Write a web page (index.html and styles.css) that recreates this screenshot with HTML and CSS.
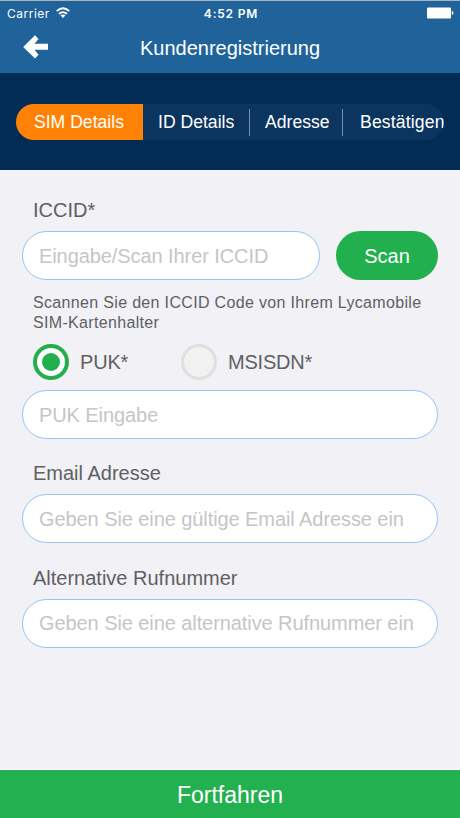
FILE: index.html
```html
<!DOCTYPE html>
<html lang="de">
<head>
<meta charset="utf-8">
<title>Kundenregistrierung</title>
<link rel="stylesheet" href="styles.css">
</head>
<body>
<header class="header">
  <div class="status">
    <div class="carrier"><span>Carrier</span>
      <svg class="wifi" width="14" height="12" viewBox="0 0 14 12" fill="none" stroke="#fff" stroke-width="1.8"><path d="M.7 4.200Q7-1.800 13.300 4.200M3 6.900Q7 3.300 11 6.900"/><path d="M4.500 8.300Q7 6.500 9.500 8.300L7 10.900Z" fill="#fff" stroke="none"/></svg>
    </div>
    <span class="time">4:52 PM</span>
    <svg class="battery" width="27" height="12" viewBox="0 0 27 12" fill="#fff"><rect y=".4" width="24" height="11" rx="1"/><path d="M24.800 3.800Q26.500 4 26.500 5.900T24.800 8Z"/></svg>
  </div>
  <div class="navbar">
    <svg class="back" width="26" height="24" viewBox="0 0 26 24"><path d="M.2 12 12 .3 15.600 4 11.400 8.800H25V14.800H11.400L15.600 19.800 12 23.600Z" fill="#fff"/></svg>
    <h1 class="title">Kundenregistrierung</h1>
  </div>
</header>
<nav class="steps">
  <div class="tabs">
    <span class="tab active">SIM Details</span>
    <span class="tab">ID Details</span>
    <span class="tab divided">Adresse</span>
    <span class="tab divided last">Bestätigen</span>
  </div>
</nav>
<main class="form">
  <label class="label" for="iccid">ICCID*</label>
  <div class="scan-row">
    <input class="field" id="iccid" placeholder="Eingabe/Scan Ihrer ICCID">
    <button class="scan">Scan</button>
  </div>
  <p class="hint">Scannen Sie den ICCID Code von Ihrem Lycamobile<br>SIM-Kartenhalter</p>
  <div class="choices">
    <div class="choice"><span class="radio checked"></span>PUK*</div>
    <div class="choice"><span class="radio"></span>MSISDN*</div>
  </div>
  <input class="field" placeholder="PUK Eingabe">
  <label class="label spaced" for="email">Email Adresse</label>
  <input class="field" id="email" placeholder="Geben Sie eine gültige Email Adresse ein">
  <label class="label spaced" for="phone">Alternative Rufnummer</label>
  <input class="field" id="phone" placeholder="Geben Sie eine alternative Rufnummer ein">
</main>
<button class="continue">Fortfahren</button>
</body>
</html>
```
FILE: styles.css
```css
* { box-sizing: border-box; }

body {
  margin: 0;
  height: 818px;
  display: flex;
  flex-direction: column;
  overflow: hidden;
  background: #f1f1f6;
  font-family: "Liberation Sans", Arial, sans-serif;
  color: #606064;
}

.header {
  height: 73px;
  border-top: 1px solid #a9b4ba;
  background: #20639b;
  color: #fff;
}

.status {
  display: grid;
  grid-template-columns: 1fr auto 1fr;
  align-items: center;
  height: 24px;
  padding: 0 7px;
  font-family: Inter, sans-serif;
  font-size: 12px;
  letter-spacing: 0.5px;
}

.carrier { display: flex; align-items: center; gap: 6px; }
.wifi { margin-top: -1px; }
.time { padding-left: 2px; font-weight: 600; font-size: 12px; letter-spacing: 0.8px; }
.battery { justify-self: end; margin-right: -1px; }

.navbar {
  display: grid;
  grid-template-columns: 1fr auto 1fr;
  align-items: center;
  height: 46px;
  padding: 0 23px;
}

.back { margin-top: -2px; }
.title { margin: 0; font-size: 20px; font-weight: 400; line-height: 46px; }

.steps {
  height: 97px;
  padding: 31px 16px 0;
  background: #032c54;
}

.tabs {
  display: flex;
  align-items: center;
  height: 36px;
  border-radius: 18px;
  overflow: hidden;
  background: #0b355f;
  color: #fff;
  font-size: 17.6px;
  line-height: 36px;
  white-space: nowrap;
}

.tab { flex: none; padding-left: 15px; width: 106px; }
.active { width: 127px; padding-left: 18px; background: #ff8206; }
.divided { width: 93px; height: 27px; padding-left: 15px; line-height: 27px; border-left: 1px solid #7890a8; }
.last { width: 110px; padding-left: 17px; letter-spacing: 0.15px; }

.form { flex: 1; padding: 27px 22px 0; }

.label {
  display: block;
  height: 34px;
  padding-left: 11px;
  font-size: 20px;
  line-height: 26px;
}

.spaced { margin-top: 21.3px; }
.scan-row { display: flex; gap: 16px; }

.field {
  display: block;
  width: 100%;
  min-width: 0;
  height: 49px;
  padding: 1px 16px 0;
  border: 1px solid #94c2f3;
  border-radius: 25px;
  background: #fff;
  font: 20px "Liberation Sans", Arial, sans-serif;
  letter-spacing: -0.08px;
}

.field::placeholder { color: #c5c5c8; opacity: 1; }

.scan {
  flex: none;
  width: 102px;
  height: 49px;
  padding: 2px 0 0;
  border: 0;
  border-radius: 25px;
  background: #21b04d;
  color: #fff;
  font: 20px "Liberation Sans", Arial, sans-serif;
}

.hint {
  margin: 13px 0 0;
  padding-left: 11px;
  font-size: 16px;
  line-height: 19.5px;
  letter-spacing: 0.33px;
}

.choices {
  display: grid;
  grid-template-columns: 148px 1fr;
  height: 58px;
  padding: 12px 0 0 11px;
  font-size: 20px;
  letter-spacing: -0.2px;
}

.choice { display: flex; align-items: center; gap: 11px; height: 36px; }

.radio {
  display: flex;
  align-items: center;
  justify-content: center;
  width: 36px;
  height: 36px;
  border: 3px solid #dfdfe0;
  border-radius: 50%;
  background: #f2f2f2;
}

.checked { border-width: 4px; border-color: #21b04d; background: #fff; }
.checked::after { content: ""; width: 18px; height: 18px; border-radius: 50%; background: #21b04d; }

.continue {
  height: 49px;
  padding: 2px 0 0;
  border: 0;
  border-top: 1px solid #fff;
  background: #23b14f;
  color: #fff;
  font: 23px "Liberation Sans", Arial, sans-serif;
}
```
